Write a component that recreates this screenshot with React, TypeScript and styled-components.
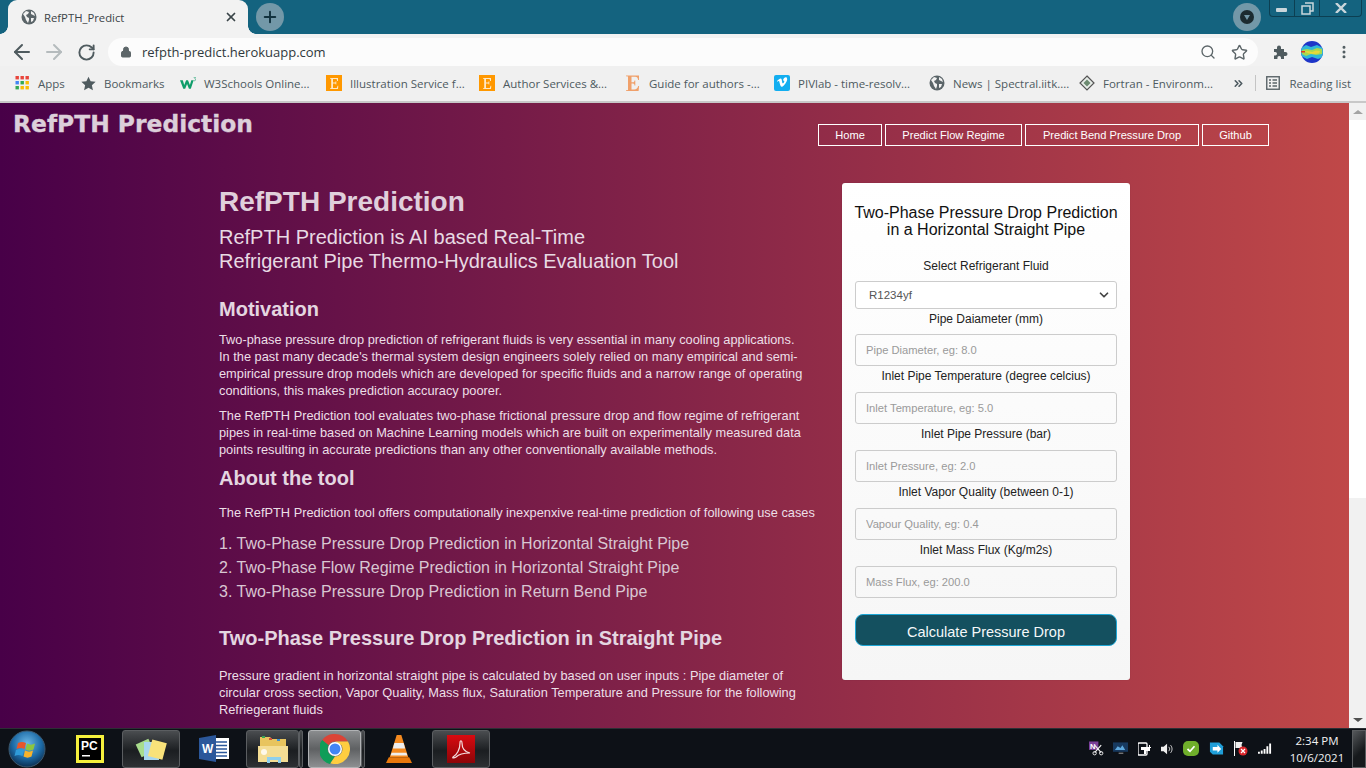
import React from "react";
import styled, { createGlobalStyle } from "styled-components";
import { ArrowLeft, ArrowRight, RotateCw, Lock, Search, Star, MoreVertical, Plus, X, ChevronsRight, ChevronDown } from "lucide-react";

const Global = createGlobalStyle`
  html, body { margin: 0; padding: 0; height: 100%; overflow: hidden; }
  * { box-sizing: border-box; }
  body { font-family: "Liberation Sans", Arial, sans-serif; }
`;

const Screen = styled.div`
  width: 1366px; height: 768px; display: flex; flex-direction: column; overflow: hidden;
`;
const TabStrip = styled.div`
  height: 34px; background: #14637f; display: flex; align-items: flex-start; padding-left: 8px; flex: none;
`;
const Tab = styled.div`
  position: relative; width: 240px; height: 34px; background: #f2f2f2; border-radius: 9px 9px 0 0; display: flex; align-items: center;
  padding: 0 10px 0 13px; gap: 7px; font: 11.3px "Open Sans", sans-serif; color: #3c4448;
  &::before, &::after { content: ""; position: absolute; bottom: 0; width: 8px; height: 8px; }
  &::before { left: -8px; background: radial-gradient(circle at 0 0, transparent 7.5px, #f2f2f2 8px); }
  &::after { right: -8px; background: radial-gradient(circle at 100% 0, transparent 7.5px, #f2f2f2 8px); }
`;
const TabTitle = styled.span` flex: 1; `;
const RoundButton = styled.div`
  width: 28px; height: 28px; margin: 3px 0 0 8px; border-radius: 50%; background: #7398a8; color: #12333f;
  display: flex; align-items: center; justify-content: center; flex: none;
`;
const StripSpacer = styled.div` flex: 1; `;
const ProfileCircle = styled(RoundButton)` margin: 3px 8px 0 0; `;
const DarkDot = styled.div`
  width: 14px; height: 14px; border-radius: 50%; background: #1c2b30; display: flex; align-items: center; justify-content: center;
`;
const Tri = styled.div`
  width: 0; height: 0; border-left: 3.5px solid transparent; border-right: 3.5px solid transparent; border-top: 5px solid #7398a8;
`;
const WinButtons = styled.div`
  width: 93px; height: 17px; margin-right: 4px; display: flex; border: 1px solid #0c3f52; border-top: 0; border-radius: 0 0 4px 4px;
`;
const WinButton = styled.div<{ $w: number }>`
  width: ${p => p.$w}px; display: flex; align-items: center; justify-content: center; border-right: 1px solid #0c3f52;
  &:last-child { border-right: 0; }
`;
const AddressRow = styled.div`
  background: #f2f2f2; display: flex; align-items: center; flex: none; padding-left: 10px; color: #4f5b5f;
  border-top: 4px solid #f2f2f2; box-sizing: content-box; height: 28px;
`;
const NavIcons = styled.div`
  display: flex; align-items: center; gap: 8px; width: 98px; flex: none;
`;
const ReloadSlot = styled.span` display: flex; margin-left: 3px; `;
const UrlPill = styled.div`
  height: 28px; flex: 1; margin-right: 15px; background: #fcfcfc; border-radius: 14px; display: flex; align-items: center;
  padding: 0 10px 0 12px; font: 13px "Open Sans", sans-serif; color: #30393d; gap: 10px;
`;
const UrlText = styled.span` flex: 1; `;
const PillIcons = styled.div` display: flex; gap: 15px; align-items: center; color: #5d6669; `;
const Toolbar = styled.div` display: flex; align-items: center; gap: 13px; padding-right: 14px; flex: none; `;
const Avatar = styled.svg` display: block; `;
const BookmarkBar = styled.div`
  height: 37px; background: #f0f0f0; border-bottom: 2px solid #c8c8c8; display: flex; align-items: center; padding-left: 15px;
  font: 11.5px "Open Sans", sans-serif; color: #4d5a60; flex: none; padding-bottom: 1px;
`;
const Bookmark = styled.div<{ $w: number }>`
  width: ${p => p.$w}px; display: flex; align-items: center; gap: 8px; white-space: nowrap; flex: none;
`;
const BookmarkEnd = styled.div`
  margin-left: auto; display: flex; align-items: center; padding-right: 15px; gap: 10px; white-space: nowrap;
`;
const BarDivider = styled.div` width: 1px; height: 16px; background: #c4c4c4; `;
const ReadingGap = styled.span` display: flex; align-items: center; gap: 9px; `;
const Viewport = styled.div` height: 625px; display: flex; flex: none; overflow: hidden; `;
const Page = styled.main`
  flex: 1; height: 625px; overflow: hidden; background: linear-gradient(to right, #480048, #c04848); color: #e8d9e2;
`;
const Header = styled.header`
  height: 80px; display: flex; justify-content: space-between; padding: 8px 80px 0 13px;
`;
const Logo = styled.div`
  font: bold 23.4px/27px "DejaVu Sans", sans-serif; color: #dccfda; white-space: nowrap; -webkit-text-stroke: 0.35px #dccfda;
`;
const Nav = styled.nav` display: flex; gap: 3px; padding-top: 13px; `;
const NavLink = styled.a<{ $w: number }>`
  width: ${p => p.$w}px; height: 22px; border: 1px solid #fff; color: #fff; font: 11.1px/20px "Liberation Sans", sans-serif; text-align: center; display: block;
`;
const Body = styled.div`
  display: grid; grid-template-columns: 623px 288px; padding-left: 219px;
`;
const Left = styled.section``;
const H1 = styled.h1`
  margin: 0 0 4px; font: bold 28px/38px "Liberation Sans", sans-serif; color: #e0cfdb;
`;
const Sub = styled.div`
  font: 20px/24px "Liberation Sans", sans-serif; color: #e8dae3; margin-bottom: 22px;
`;
const H3 = styled.h3<{ $before?: number; $after?: number }>`
  margin: ${p => p.$before ?? 0}px 0 ${p => p.$after ?? 8}px; font: bold 20px/28px "Liberation Sans", sans-serif; color: #e4d6e0;
`;
const P = styled.p<{ $after?: number }>`
  margin: 0 0 ${p => p.$after ?? 8}px; font: 12.8px/17px "Liberation Sans", sans-serif; color: #ecdfe7; white-space: nowrap;
`;
const ListLine = styled.div`
  font: 16px/24px "Liberation Sans", sans-serif; color: #d9c6d2;
`;
const Card = styled.aside`
  width: 288px; height: 497px; background: linear-gradient(#ffffff, #f6f6f6); border-radius: 3px; padding: 21px 13px 0; color: #111; text-align: center;
  box-shadow: 0 0 1px rgba(0,0,0,.3);
`;
const CardTitle = styled.div` font: 16px/17px "Liberation Sans", sans-serif; color: #111; margin: 0 -10px 20px; white-space: nowrap; `;
const Label = styled.div` font: 12px/16px "Liberation Sans", sans-serif; color: #222; height: 16px; `;
const SelectBox = styled.div`
  height: 28px; margin: 7px 0 2px; border: 1px solid #ccc; border-radius: 3px; background: #fff; display: flex; align-items: center; justify-content: space-between;
  padding: 0 5px 0 13px; font: 11.5px "Liberation Sans", sans-serif; color: #555;
`;
const FieldInput = styled.input`
  display: block; width: 100%; height: 32px; margin: 8px 0 2px; border: 1px solid #ccc; border-radius: 3px; background: transparent; padding: 0 10px;
  font: 11.2px "Liberation Sans", sans-serif; color: #555; outline: none;
  &:first-of-type { margin-top: 7px; }
  &::placeholder { color: #9a9a9a; opacity: 1; }
`;
const CalcButton = styled.button`
  display: block; width: 100%; height: 32px; margin-top: 16px; border: 1px solid #1ea7d6; border-radius: 8px; background: #14505f; color: #f4f8f9;
  font: 14.5px "Liberation Sans", sans-serif; padding: 3px 0 0;
`;
const Scrollbar = styled.div`
  width: 17px; flex: none; background: #f1f1f1; display: flex; flex-direction: column; align-items: center; justify-content: space-between;
`;
const ScrollThumb = styled.div` width: 17px; height: 378px; background: #fff; `;
const ScrollTop = styled.div` display: flex; flex-direction: column; width: 17px; `;
const ScrollArrow = styled.div`
  height: 17px; display: flex; align-items: center; justify-content: center; background: #f1f1f1;
`;
const TriUp = styled.div`
  width: 0; height: 0; border-left: 5px solid transparent; border-right: 5px solid transparent; border-bottom: 4px solid #a3a3a3;
`;
const TriDown = styled(TriUp)` transform: rotate(180deg); border-bottom-color: #505050; `;
const Taskbar = styled.footer`
  height: 40px; background: #0d1117; display: flex; align-items: center; flex: none; border-top: 1px solid #2c2f34; padding-left: 8px;
`;
const StartOrb = styled.div` width: 38px; display: flex; flex: none; margin-right: 14px; `;
const TaskSlot = styled.div<{ $w: number; $state?: "open" | "active"; $gap?: number }>`
  width: ${p => p.$w}px; height: 38px; flex: none; display: flex; align-items: center; justify-content: center; border-radius: 3px; margin-right: ${p => p.$gap ?? 2}px;
  ${p => p.$state === "open" ? "background: linear-gradient(#4a4d50, #1b1e21 55%, #2d3033); border: 1px solid #5b5e61;" : ""}
  ${p => p.$state === "active" ? "background: linear-gradient(#8a8c8e, #5f6163 50%, #8d8f91); border: 1px solid #b0b2b4;" : ""}
`;
const Tray = styled.div` margin-left: auto; display: flex; align-items: center; gap: 9.4px; `;
const Clock = styled.div`
  width: 66px; margin: 0 2px 0 3px; text-align: center; color: #f2f2f2; font: 11.5px/17px "Open Sans", sans-serif;
`;
const ShowDesk = styled.div`
  width: 14px; height: 38px; margin-left: -9.4px; border: 1px solid #5a5d60; background: linear-gradient(135deg, #55585b, #16191c 60%);
`;

const Globe = ({ size = 16, c = "#5b6569" }: { size?: number; c?: string }) => (
  <svg width={size} height={size} viewBox="0 0 16 16" style={{ flex: "none" }}>
    <circle cx="8" cy="8" r="7.5" fill={c} />
    <path d="M2 5l3-3 3 1-1 2-2 1 1 2 2 1v2l-1 3-2-3-1-3zM10 2l3 2 1 3-2-1-2-1zM10 9l3 0-1 3-2 1z" fill="#f2f2f2" />
  </svg>
);
const EIcon = ({ bare }: { bare?: boolean }) => (
  <svg width="16" height="16" viewBox="0 0 16 16" style={{ flex: "none" }}>
    {!bare && <rect width="16" height="16" fill="#ff9800" />}
    {bare
      ? <path d="M1 .5h13v4.500h-.9c-.3-2-1-3.200-3-3.200H6.500v5.400H8c1 0 1.400-.8 1.500-1.800h.8v5h-.8c-.1-1-.5-1.800-1.500-1.800H6.500v6h2.700c2.300 0 3.400-1.300 4-3.500h.9l-.5 5H1v-.8l2-.3V1.600l-2-.3z" fill="#f0a06a" />
      : <path d="M4 3h8v3h-.8l-.6-2H7v3.400h2.400l.3-1.200h.6v3.400h-.6l-.3-1.200H7V13h3.800l.8-2.200h.7L12 14H4v-.7h1.200V3.700H4z" fill="#ffe9c7" />}
  </svg>
);
const AppsIcon = () => (
  <svg width="15" height="14" viewBox="0 0 14 14" style={{ flex: "none" }}>
    {[0, 5, 10].flatMap((y, r) => [0, 5, 10].map((x, i) => (
      <rect key={`${r}${i}`} x={x} y={y} width="3.4" height="3.4" fill={[["#e8453c", "#e8453c", "#e8453c"], ["#4285f4", "#34a853", "#fbbc05"], ["#34a853", "#fbbc05", "#fbbc05"]][r][i]} />
    )))}
  </svg>
);
const W3 = () => (
  <svg width="16" height="13" viewBox="0 0 17 13" style={{ flex: "none" }}>
    <path d="M0 3h3l1.500 5L6.500 3h2l2 5L12 3h2.500l-3 9H9.500L7.500 7l-2 5H3.500z" fill="#0f9d6a" />
    <path d="M14.500 0h2v.6l-.8.9c.6.1.9.5.9 1 0 .7-.6 1.100-1.300 1.100l-.8-.2" fill="none" stroke="#0f9d6a" strokeWidth=".6" />
  </svg>
);
const Vimeo = () => (
  <svg width="16" height="16" viewBox="0 0 16 16" style={{ flex: "none" }}>
    <rect width="16" height="16" rx="2" fill="#13aef0" />
    <path d="M3 6c1.600-1.400 2.700-2.500 3.600-2.500 1.200 0 1.200 1.800 1.500 3.200.2.900.4 1.600.7 1.600.6 0 2-2.100 1.300-2.600-.4-.2-1 0-1.100.2C8.600 3.300 13-.2 13.200 4.300c0 2-3 6.700-5 7.400-1.600.4-2.300-2.600-2.700-4.300-.3-1.300-.5-1.700-1-1.300l-.9.7z" fill="#fff" />
  </svg>
);
const FortranIcon = () => (
  <svg width="16" height="16" viewBox="0 0 16 16" style={{ flex: "none" }}>
    <path d="M8 1l7 7-7 7-7-7z" fill="#e7ece8" stroke="#555" strokeWidth="1.200" />
    <path d="M8 4.500l3.500 3.500L8 11.500 4.500 8z" fill="#6c8a70" />
  </svg>
);
const ReadingIcon = () => (
  <svg width="14" height="14" viewBox="0 0 14 14" style={{ flex: "none" }}>
    <rect x=".75" y=".75" width="12.500" height="12.500" fill="none" stroke="#5a6468" strokeWidth="1.400" />
    <path d="M3 4h2M3 7h2M3 10h2M6.500 4H11M6.500 7H11M6.500 10H11" stroke="#5a6468" strokeWidth="1.400" />
  </svg>
);
const StarFilled = () => (
  <svg width="15" height="15" viewBox="0 0 24 24" style={{ flex: "none" }}>
    <path d="M12 1l3.400 7.400 8 .9-6 5.400 1.700 7.900L12 18.600 4.900 22.600l1.700-7.900-6-5.400 8-.9z" fill="#4f5b5f" />
  </svg>
);
const ProfileMap = () => (
  <Avatar width="22" height="22" viewBox="0 0 22 22">
    <defs><clipPath id="pc"><circle cx="11" cy="11" r="11" /></clipPath></defs>
    <g clipPath="url(#pc)">
      <rect width="22" height="22" fill="#1e35c8" />
      <path d="M0 7l5-3 5 2 6-2 6 3v9l-5 2-6-2-5 2-6-3z" fill="#2fb8d8" />
      <path d="M1 9l5-1 5 1 5-2 5 1v5l-6 1-5-1-5 2-4-2z" fill="#a9d84e" />
      <path d="M3 10.500l4-.5 4 1 4-1.500 4 .5-1 2.500-5 .5-5-.5z" fill="#e6d83a" />
      <path d="M0 10h4v1.600H0z" fill="#e03a20" />
    </g>
  </Avatar>
);
const PuzzleIcon = () => (
  <svg width="15" height="15" viewBox="0 0 15 15">
    <path d="M1 4h3V2.500a2 2 0 0 1 4 0V4h3v3h1.500a2 2 0 0 1 0 4H11v3H8v-1.200a1.800 1.800 0 0 0-3.600 0V14H1v-3.500h1.200a1.800 1.800 0 0 0 0-3.600H1z" fill="#4f5b5f" />
  </svg>
);
const StartIcon = () => (
  <svg width="38" height="38" viewBox="0 0 38 38">
    <defs>
      <radialGradient id="orb" cx="50%" cy="35%" r="65%"><stop offset="0" stopColor="#6db8e6" /><stop offset=".6" stopColor="#1d6ca8" /><stop offset="1" stopColor="#0c2f52" /></radialGradient>
    </defs>
    <circle cx="19" cy="19" r="18" fill="url(#orb)" stroke="#3d5a70" />
    <path d="M10 13c3-1.500 5-1.500 8 0l-1.500 6c-3-1.500-5-1.500-8 0z" fill="#e8562a" />
    <path d="M19 13.500c3 1.500 5 1.500 8 0l-1.500 6c-3 1.500-5 1.500-8 0z" fill="#8cc63f" />
    <path d="M8 20c3-1.500 5-1.500 8 0l-1.500 6c-3-1.500-5-1.500-8 0z" fill="#2f9bd9" />
    <path d="M17 20.500c3 1.500 5 1.500 8 0L23.500 26.500c-3 1.500-5 1.500-8 0z" fill="#f7b32b" />
  </svg>
);
const PyCharm = () => (
  <svg width="28" height="28" viewBox="0 0 28 28">
    <rect width="28" height="28" fill="#f5f03c" />
    <rect x="3" y="3" width="22" height="22" fill="#000" />
    <text x="5" y="14.500" fill="#fff" fontFamily="Liberation Sans" fontSize="12" fontWeight="700">PC</text>
    <rect x="6" y="20" width="8" height="1.500" fill="#fff" />
  </svg>
);
const Notes = () => (
  <svg width="32" height="28" viewBox="0 0 32 28">
    <rect x="3" y="6" width="14" height="14" transform="rotate(-25 10 13)" fill="#a8dc8c" />
    <rect x="9" y="7" width="15" height="18" fill="#a8d6ee" />
    <rect x="15" y="6" width="15" height="17" transform="rotate(15 22 14)" fill="#f9e27a" />
  </svg>
);
const Word = () => (
  <svg width="30" height="27" viewBox="0 0 30 27">
    <rect x="10" y="3" width="20" height="21" fill="#fff" />
    <path d="M17 7h11M17 10.500h11M17 14h11M17 17.500h11M17 21h11" stroke="#2b579a" strokeWidth="1.500" />
    <path d="M0 3l17-3v27L0 24z" fill="#2b579a" />
    <text x="3" y="18" fill="#fff" fontFamily="Liberation Sans" fontSize="12" fontWeight="700">W</text>
  </svg>
);
const Folder = () => (
  <svg width="32" height="30" viewBox="0 0 32 30">
    <path d="M3 3h10l2 2h14v10H3z" fill="#e8c45e" />
    <rect x="5" y="2" width="3" height="2" fill="#3aa655" />
    <rect x="12" y="4" width="3" height="2" fill="#d24f3a" />
    <rect x="20" y="5" width="3" height="2" fill="#3a8ed2" />
    <path d="M1 12h30v16H1z" fill="#f4dd94" />
    <path d="M10 23h14v6h-3v-3h-8v3h-3z" fill="#8fd0ee" />
    <circle cx="7" cy="18" r="3" fill="#fff" opacity=".8" />
  </svg>
);
const Chrome = () => (
  <svg width="30" height="30" viewBox="0 0 30 30">
    <path d="M15 0a15 15 0 0 1 13 7.500H15a7.500 7.500 0 0 0-6.500 3.800L2.200 6A15 15 0 0 1 15 0z" fill="#db4437" />
    <path d="M2.200 6l6.300 5.300A7.500 7.500 0 0 0 15 22.500L10 30A15 15 0 0 1 2.200 6z" fill="#0f9d58" />
    <path d="M28 7.500A15 15 0 0 1 10.400 29.300L15 22.500a7.500 7.500 0 0 0 6.500-11.200L15 7.500z" fill="#ffcd40" />
    <circle cx="15" cy="15" r="7" fill="#fff" />
    <circle cx="15" cy="15" r="5.500" fill="#4285f4" />
  </svg>
);
const Vlc = () => (
  <svg width="26" height="30" viewBox="0 0 28 32">
    <path d="M11.500 1h5L24 25H4z" fill="#f58a1f" />
    <path d="M9 9.500h10l1.600 6H7.400zM6 20h16l1 3H5z" fill="#eee" />
    <path d="M3 25h22l3 6H0z" fill="#e8780c" />
  </svg>
);
const Acrobat = () => (
  <svg width="28" height="28" viewBox="0 0 28 28">
    <defs><linearGradient id="acro" x1="0" y1="0" x2="0" y2="1"><stop offset="0" stopColor="#d80a10" /><stop offset="1" stopColor="#8c0508" /></linearGradient></defs>
    <rect width="28" height="28" fill="url(#acro)" />
    <path d="M6 22c4-2 7-8 7-14 0-3 2-3 2 0 0 6 3 9 8 10-5 0-11 1-14 4-2 1.500-4 1-3 0z" fill="none" stroke="#f4dede" strokeWidth="1.200" />
  </svg>
);
const OneNoteTray = () => (
  <svg width="15" height="15" viewBox="0 0 16 15">
    <rect width="10" height="9" fill="#7a3f98" />
    <text x="1" y="8" fontSize="8" fontWeight="700" fontFamily="Liberation Sans" fill="#fff">N</text>
    <path d="M6 4l7 8M13 4l-7 8" stroke="#eee" strokeWidth="1.300" />
    <circle cx="6" cy="12.500" r="1.800" fill="none" stroke="#eee" />
    <circle cx="13" cy="12.500" r="1.800" fill="none" stroke="#eee" />
  </svg>
);
const MonitorTray = () => (
  <svg width="15" height="15" viewBox="0 0 16 15">
    <rect y="1" width="16" height="10" fill="#17395e" />
    <path d="M2 9l3-4 3 2 2-3 3 5z" fill="#5ea8dc" />
    <path d="M6 12h5v1H6z" fill="#aaa" />
  </svg>
);
const PlugTray = () => (
  <svg width="14" height="15" viewBox="0 0 14 15">
    <rect x="0" y="2" width="9" height="12" rx="1" fill="none" stroke="#fff" strokeWidth="1.300" />
    <path d="M3 6h8V4h1v2h1v1h-1v3H8v3H6V9H3z" fill="#fff" />
  </svg>
);
const SoundTray = () => (
  <svg width="13" height="14" viewBox="0 0 15 14">
    <path d="M0 4.500h3L7 1v12L3 9.500H0z" fill="#eee" />
    <path d="M9 4.500a3.500 3.500 0 0 1 0 5M11 2.500a6.500 6.500 0 0 1 0 9" fill="none" stroke="#ddd" />
  </svg>
);
const CheckTray = () => (
  <svg width="16" height="15" viewBox="0 0 16 15">
    <rect width="16" height="15" rx="5" fill="#6fae2b" />
    <path d="M4.500 8l2.500 2.300 4.500-5" fill="none" stroke="#fff" strokeWidth="1.700" />
  </svg>
);
const ShareTray = () => (
  <svg width="15" height="15" viewBox="0 0 16 15">
    <path d="M1 1h10l4 4v9H4L1 11z" fill="#1f9ed8" />
    <path d="M4 6h5V3.500L13 8l-4 4V9.500H4z" fill="#fff" />
  </svg>
);
const FlagTray = () => (
  <svg width="15" height="15" viewBox="0 0 14 15">
    <path d="M1 0v15" stroke="#fff" />
    <path d="M2 1h7l-1 3 1 3H2z" fill="#eee" />
    <circle cx="9.500" cy="10" r="4.500" fill="#d9262b" />
    <path d="M7.500 8l4 4M11.500 8l-4 4" stroke="#fff" strokeWidth="1.200" />
  </svg>
);
const SignalTray = () => (
  <svg width="14" height="12" viewBox="0 0 15 12">
    <path d="M0 9h2v2H0zM3 7.500h2V11H3zM6 6h2v5H6zM9 3h2v8H9zM12 0h2v11h-2z" fill="#fff" />
  </svg>
);

const bookmarks: [number, React.ReactNode, string][] = [
  [66, <AppsIcon />, "Apps"],
  [99, <StarFilled />, "Bookmarks"],
  [146, <W3 />, "W3Schools Online..."],
  [153, <EIcon />, "Illustration Service f..."],
  [146, <EIcon />, "Author Services &..."],
  [149, <EIcon bare />, "Guide for authors -..."],
  [155, <Vimeo />, "PIVlab - time-resolv..."],
  [150, <Globe />, "News | Spectral.iitk...."],
  [150, <FortranIcon />, "Fortran - Environm..."],
];

const fields: [string, string][] = [
  ["Pipe Daiameter (mm)", "Pipe Diameter, eg: 8.0"],
  ["Inlet Pipe Temperature (degree celcius)", "Inlet Temperature, eg: 5.0"],
  ["Inlet Pipe Pressure (bar)", "Inlet Pressure, eg: 2.0"],
  ["Inlet Vapor Quality (between 0-1)", "Vapour Quality, eg: 0.4"],
  ["Inlet Mass Flux (Kg/m2s)", "Mass Flux, eg: 200.0"],
];

export default function App() {
  return (
    <Screen>
      <Global />
      <TabStrip>
        <Tab>
          <Globe />
          <TabTitle>RefPTH_Predict</TabTitle>
          <X size={14} strokeWidth={3} color="#3a4448" />
        </Tab>
        <RoundButton><Plus size={18} strokeWidth={2.6} /></RoundButton>
        <StripSpacer />
        <ProfileCircle><DarkDot><Tri /></DarkDot></ProfileCircle>
        <WinButtons>
          <WinButton $w={25}><svg width="12" height="8" viewBox="0 0 12 8"><rect y="4" width="11" height="4" rx="1" fill="#c9d6db" /></svg></WinButton>
          <WinButton $w={26}><svg width="13" height="13" viewBox="0 0 13 13"><path d="M4 1h8v8H9M1 4h8v8H1z" fill="none" stroke="#c9d6db" strokeWidth="1.500" /></svg></WinButton>
          <WinButton $w={41}><svg width="12" height="10" viewBox="0 0 12 10"><path d="M1 0l10 10M11 0L1 10" stroke="#c9d6db" strokeWidth="2.400" /></svg></WinButton>
        </WinButtons>
      </TabStrip>
      <AddressRow>
        <NavIcons>
          <ArrowLeft size={24} strokeWidth={2} />
          <ArrowRight size={24} strokeWidth={2} color="#b5bbbd" />
          <ReloadSlot><RotateCw size={19} strokeWidth={2.4} /></ReloadSlot>
        </NavIcons>
        <UrlPill>
          <Lock size={12} fill="#5d6669" color="#5d6669" />
          <UrlText>refpth-predict.herokuapp.com</UrlText>
          <PillIcons>
            <Search size={16} />
            <Star size={17} />
          </PillIcons>
        </UrlPill>
        <Toolbar>
          <PuzzleIcon />
          <ProfileMap />
          <MoreVertical size={16} strokeWidth={2.5} />
        </Toolbar>
      </AddressRow>
      <BookmarkBar>
        {bookmarks.map(([w, icon, label]) => (
          <Bookmark key={label} $w={w}>{icon}<span>{label}</span></Bookmark>
        ))}
        <BookmarkEnd>
          <ChevronsRight size={13} strokeWidth={3} />
          <BarDivider />
          <ReadingGap><ReadingIcon />Reading list</ReadingGap>
        </BookmarkEnd>
      </BookmarkBar>
      <Viewport>
        <Page>
          <Header>
            <Logo>RefPTH Prediction</Logo>
            <Nav>
              <NavLink $w={64}>Home</NavLink>
              <NavLink $w={137}>Predict Flow Regime</NavLink>
              <NavLink $w={174}>Predict Bend Pressure Drop</NavLink>
              <NavLink $w={67}>Github</NavLink>
            </Nav>
          </Header>
          <Body>
            <Left>
              <H1>RefPTH Prediction</H1>
              <Sub>RefPTH Prediction is AI based Real-Time<br />Refrigerant Pipe Thermo-Hydraulics Evaluation Tool</Sub>
              <H3>Motivation</H3>
              <P>Two-phase pressure drop prediction of refrigerant fluids is very essential in many cooling applications.<br />In the past many decade's thermal system design engineers solely relied on many empirical and semi-<br />empirical pressure drop models which are developed for specific fluids and a narrow range of operating<br />conditions, this makes prediction accuracy poorer.</P>
              <P $after={6}>The RefPTH Prediction tool evaluates two-phase frictional pressure drop and flow regime of refrigerant<br />pipes in real-time based on Machine Learning models which are built on experimentally measured data<br />points resulting in accurate predictions than any other conventionally available methods.</P>
              <H3 $after={12}>About the tool</H3>
              <P $after={11}>The RefPTH Prediction tool offers computationally inexpenxive real-time prediction of following use cases</P>
              <ListLine>1. Two-Phase Pressure Drop Prediction in Horizontal Straight Pipe</ListLine>
              <ListLine>2. Two-Phase Flow Regime Prediction in Horizontal Straight Pipe</ListLine>
              <ListLine>3. Two-Phase Pressure Drop Prediction in Return Bend Pipe</ListLine>
              <H3 $before={20} $after={15}>Two-Phase Pressure Drop Prediction in Straight Pipe</H3>
              <P>Pressure gradient in horizontal straight pipe is calculated by based on user inputs : Pipe diameter of<br />circular cross section, Vapor Quality, Mass flux, Saturation Temperature and Pressure for the following<br />Refriegerant fluids</P>
            </Left>
            <Card>
              <CardTitle>Two-Phase Pressure Drop Prediction<br />in a Horizontal Straight Pipe</CardTitle>
              <Label>Select Refrigerant Fluid</Label>
              <SelectBox>R1234yf<ChevronDown size={14} strokeWidth={3} color="#444" /></SelectBox>
              {fields.map(([l, ph]) => (
                <React.Fragment key={l}>
                  <Label>{l}</Label>
                  <FieldInput placeholder={ph} readOnly />
                </React.Fragment>
              ))}
              <CalcButton>Calculate Pressure Drop</CalcButton>
            </Card>
          </Body>
        </Page>
        <Scrollbar>
          <ScrollTop>
            <ScrollArrow><TriUp /></ScrollArrow>
            <ScrollThumb />
          </ScrollTop>
          <ScrollArrow><TriDown /></ScrollArrow>
        </Scrollbar>
      </Viewport>
      <Taskbar>
        <StartOrb><StartIcon /></StartOrb>
        <TaskSlot $w={60}><PyCharm /></TaskSlot>
        <TaskSlot $w={58} $state="open"><Notes /></TaskSlot>
        <TaskSlot $w={64} $gap={0}><Word /></TaskSlot>
        <TaskSlot $w={53} $state="open" $gap={0}><Folder /></TaskSlot>
        <TaskSlot $w={4} $state="open" $gap={5} />
        <TaskSlot $w={53} $state="active" $gap={0}><Chrome /></TaskSlot>
        <TaskSlot $w={4} $state="open" $gap={3} />
        <TaskSlot $w={62}><Vlc /></TaskSlot>
        <TaskSlot $w={58} $state="open"><Acrobat /></TaskSlot>
        <Tray>
          <OneNoteTray /><MonitorTray /><PlugTray /><SoundTray /><CheckTray /><ShareTray /><FlagTray /><SignalTray />
          <Clock>2:34 PM<br />10/6/2021</Clock>
          <ShowDesk />
        </Tray>
      </Taskbar>
    </Screen>
  );
}
